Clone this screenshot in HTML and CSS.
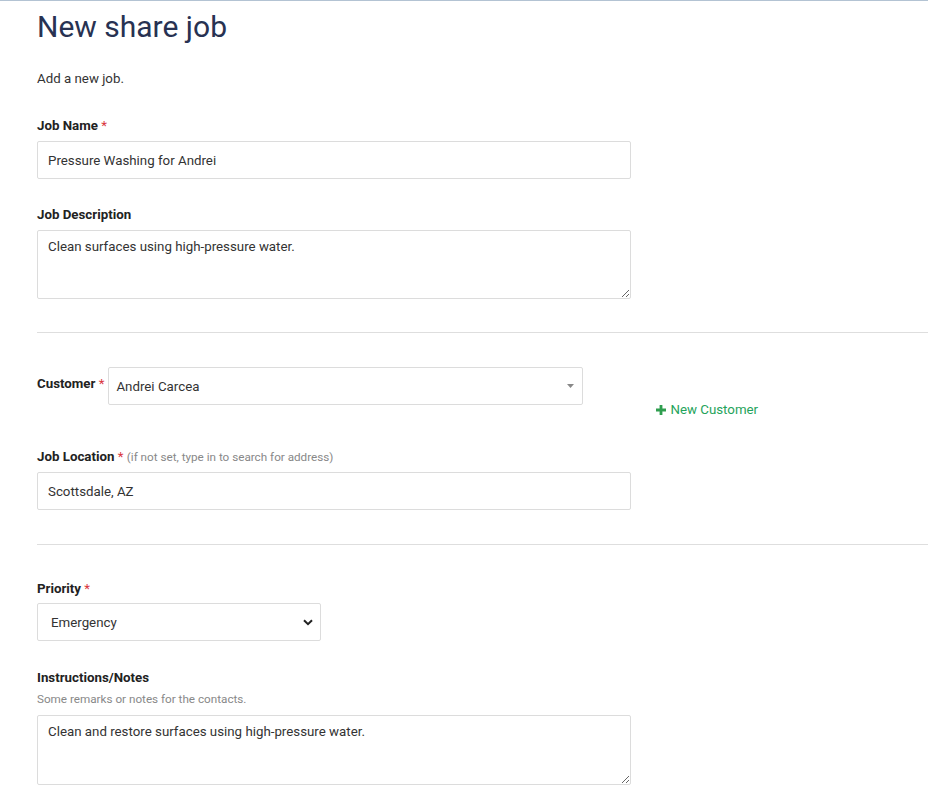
FILE: index.html
```html
<!DOCTYPE html>
<html lang="en">
<head>
<meta charset="utf-8">
<title>New share job</title>
<link rel="stylesheet" href="styles.css">
</head>
<body>
<div class="page">
  <h1 class="title">New share job</h1>
  <p class="intro">Add a new job.</p>

  <div class="field f-name">
    <label class="label">Job Name <span class="req">*</span></label>
    <input class="control" type="text" value="Pressure Washing for Andrei">
  </div>

  <div class="field f-desc">
    <label class="label">Job Description</label>
    <textarea class="control area">Clean surfaces using high-pressure water.</textarea>
  </div>

  <hr class="sep sep-1">

  <div class="customer-row">
    <label class="label inline-label">Customer <span class="req">*</span></label>
    <div class="select-box customer-select">
      <span class="select-text">Andrei Carcea</span>
      <svg class="caret" width="7" height="4" viewBox="0 0 7 4"><path d="M0 0 L7 0 L3.5 4 Z" fill="#888"/></svg>
    </div>
    <a class="new-customer" href="#">
      <svg class="plus" width="10" height="10" viewBox="0 0 10 10"><path d="M3.6 0 H6.4 V3.6 H10 V6.4 H6.4 V10 H3.6 V6.4 H0 V3.6 H3.6 Z" fill="#2f9e4f"/></svg>
      New Customer
    </a>
  </div>

  <div class="field f-loc">
    <label class="label">Job Location <span class="req">*</span> <span class="hint">(if not set, type in to search for address)</span></label>
    <input class="control" type="text" value="Scottsdale, AZ">
  </div>

  <hr class="sep sep-2">

  <div class="field f-prio">
    <label class="label">Priority <span class="req">*</span></label>
    <div class="select-box prio-select">
      <span class="select-text">Emergency</span>
      <svg class="chevron" width="10" height="7" viewBox="0 0 10 7"><path d="M1 1.2 L5 5.2 L9 1.2" fill="none" stroke="#222" stroke-width="2"/></svg>
    </div>
  </div>

  <div class="field f-notes">
    <label class="label">Instructions/Notes</label>
    <p class="help">Some remarks or notes for the contacts.</p>
    <textarea class="control area notes">Clean and restore surfaces using high-pressure water.</textarea>
  </div>
</div>
</body>
</html>
```

FILE: styles.css
```css
html, body {
  margin: 0;
  padding: 0;
  background: #fff;
}
body {
  border-top: 1px solid #b3c3d3;
  font-family: Roboto, "Liberation Sans", Arial, sans-serif;
  font-size: 13.3px;
  color: #333;
  overflow: hidden;
}
.page {
  padding: 0 0 0 37px;
}
.title {
  margin: 8px 0 0;
  font-size: 30px;
  line-height: 36px;
  font-weight: 400;
  color: #283252;
}
.intro {
  margin: 26px 0 0;
  line-height: 16px;
  color: #333;
}
.field {
  display: flex;
  flex-direction: column;
  align-items: flex-start;
}
.label {
  display: block;
  line-height: 16px;
  padding-top: 1px;
  font-weight: 700;
  color: #222;
  margin-bottom: 7px;
}
.req {
  color: #d9363e;
  font-weight: 400;
}
.hint {
  font-weight: 400;
  font-size: 11.7px;
  color: #888;
}
.control {
  box-sizing: border-box;
  width: 594px;
  height: 38px;
  margin: 0;
  padding: 0 10px;
  border: 1px solid #dcdcdc;
  border-radius: 2px;
  font-family: inherit;
  font-size: 13.3px;
  color: #333;
  background: #fff;
  outline: none;
}
.area {
  height: 69px;
  padding: 8px 10px;
  line-height: 16px;
  resize: vertical;
  display: block;
}
.notes {
  height: 70px;
}
.f-name { margin-top: 30px; }
.f-desc { margin-top: 27px; }
.sep {
  border: 0;
  border-top: 1px solid #dedede;
  margin: 33px 0 0;
  height: 0;
}
.sep-2 { margin-top: 34px; }
.customer-row {
  display: flex;
  align-items: flex-start;
  margin-top: 34px;
}
.inline-label {
  padding-top: 0;
  margin: 9px 4px 0 0;
}
.select-box {
  box-sizing: border-box;
  height: 38px;
  border: 1px solid #dcdcdc;
  border-radius: 2px;
  display: flex;
  align-items: center;
  justify-content: space-between;
  background: #fff;
  color: #333;
}
.customer-select {
  width: 475px;
  padding: 0 8px 0 7px;
}
.customer-select .caret {
  margin-top: -1px;
}
.new-customer {
  margin: 35px 0 0 73px;
  line-height: 16px;
  color: #1fa35b;
  text-decoration: none;
  display: flex;
  align-items: center;
  gap: 4px;
}
.f-loc { margin-top: 30px; }
.f-prio { margin-top: 35px; }
.f-prio .label { margin-bottom: 6px; }
.prio-select {
  width: 284px;
  padding: 0 7px 0 13px;
}
.f-notes { margin-top: 28px; }
.f-notes .label { margin-bottom: 0; }
.help {
  margin: 6px 0 9px;
  font-size: 11.7px;
  line-height: 14px;
  color: #888;
}
```
